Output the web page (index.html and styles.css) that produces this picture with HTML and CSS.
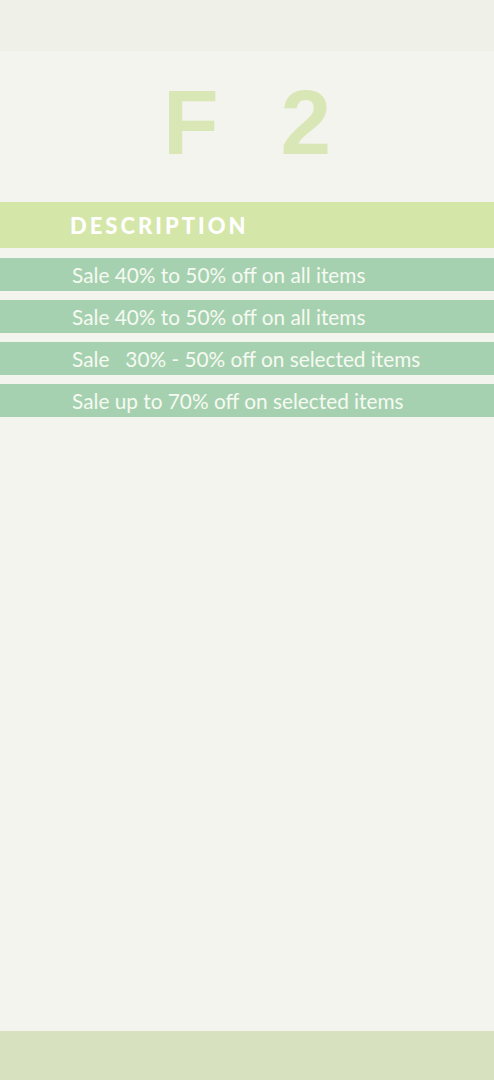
FILE: index.html
```html
<!DOCTYPE html>
<html lang="en">

<head>
    <meta charset="UTF-8">
    <meta name="viewport" content="width=device-width, initial-scale=1.0">
    <title>F2 - Sale</title>
    <link rel="stylesheet" href="styles.css">
</head>

<body>
    <div class="top-bar"></div>

    <main class="content">
        <h1 class="floor-title"><span>F</span><span>2</span></h1>

        <div class="desc-header">DESCRIPTION</div>

        <ul class="sale-list">
            <li class="sale-row">Sale 40% to 50% off on all items</li>
            <li class="sale-row">Sale 40% to 50% off on all items</li>
            <li class="sale-row">Sale&nbsp;&nbsp;&nbsp;30% - 50% off on selected items</li>
            <li class="sale-row">Sale up to 70% off on selected items</li>
        </ul>
    </main>

    <div class="bottom-bar"></div>
</body>

</html>
```

FILE: styles.css
```css
* {
    margin: 0;
    padding: 0;
    box-sizing: border-box;
}

body {
    font-family: "Lato", "Open Sans", sans-serif;
    background-color: #f4f4ee;
    color: #fff;
    min-height: 100vh;
    display: flex;
    flex-direction: column;
}

.top-bar {
    height: 51px;
    background-color: #eff1e8;
}

.content {
    flex: 1;
    padding-top: 22px;
}

.floor-title {
    display: flex;
    justify-content: center;
    gap: 62px;
    height: 129px;
    font-family: "Liberation Sans", Arial, sans-serif;
    font-weight: 700;
    font-size: 91px;
    line-height: 100px;
    color: #d9e7b6;
}

.desc-header {
    height: 46px;
    background-color: #d5e6a9;
    padding-left: 70px;
    font-family: "Lato", sans-serif;
    font-weight: 900;
    font-size: 22px;
    letter-spacing: 3px;
    line-height: 48px;
    margin-bottom: 10px;
}

.sale-list {
    list-style: none;
    display: flex;
    flex-direction: column;
    gap: 9px;
}

.sale-row {
    height: 33px;
    background-color: #a6d1b0;
    padding-left: 72px;
    font-size: 20.8px;
    line-height: 33px;
    color: #f6faf2;
}

.bottom-bar {
    height: 49px;
    background-color: #d7e1c0;
}
```
